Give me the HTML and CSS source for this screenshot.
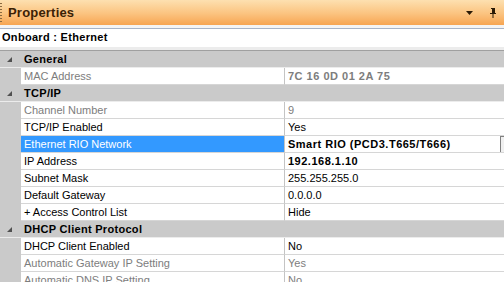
FILE: index.html
```html
<!DOCTYPE html>
<html lang="en">
<head>
  <meta charset="utf-8">
  <title>Properties</title>
  <link rel="stylesheet" href="styles.css">
</head>
<body>
  <div class="panel">
    <!-- Title bar -->
    <div class="title-bar">
      <span class="grip"></span>
      <span class="title">Properties</span>
      <span class="title-tools">
        <svg width="7" height="4" viewBox="0 0 7 4"><path d="M0 0h7L3.5 4z" fill="#2b1a06"/></svg>
        <svg width="8" height="10" viewBox="0 0 8 10"><path d="M2 0h4v1H5v4h2v1H4.5v4h-1V6H1V5h2V1H2z" fill="#2b1a06"/><path d="M5 1h1v4H5z" fill="#2b1a06"/></svg>
      </span>
    </div>

    <div class="object-box">
      <div class="object-name">Onboard : Ethernet</div>
    </div>

    <div class="grid">
      <div class="row category"><span class="gutter"><i class="arrow"></i></span><span class="cat-name">General</span></div>
      <div class="row"><span class="gutter"></span><span class="name dim">MAC Address</span><span class="value dim bold">7C 16 0D 01 2A 75</span></div>

      <div class="row category"><span class="gutter"><i class="arrow"></i></span><span class="cat-name">TCP/IP</span></div>
      <div class="row"><span class="gutter"></span><span class="name dim">Channel Number</span><span class="value dim">9</span></div>
      <div class="row"><span class="gutter"></span><span class="name">TCP/IP Enabled</span><span class="value">Yes</span></div>
      <div class="row selected"><span class="gutter"></span><span class="name">Ethernet RIO Network</span><span class="value bold">Smart RIO (PCD3.T665/T666)<i class="drop"></i></span></div>
      <div class="row"><span class="gutter"></span><span class="name">IP Address</span><span class="value bold">192.168.1.10</span></div>
      <div class="row"><span class="gutter"></span><span class="name">Subnet Mask</span><span class="value">255.255.255.0</span></div>
      <div class="row"><span class="gutter"></span><span class="name">Default Gateway</span><span class="value">0.0.0.0</span></div>
      <div class="row"><span class="gutter"></span><span class="name">+ Access Control List</span><span class="value">Hide</span></div>

      <div class="row category"><span class="gutter"><i class="arrow"></i></span><span class="cat-name">DHCP Client Protocol</span></div>
      <div class="row"><span class="gutter"></span><span class="name">DHCP Client Enabled</span><span class="value">No</span></div>
      <div class="row"><span class="gutter"></span><span class="name dim">Automatic Gateway IP Setting</span><span class="value dim">Yes</span></div>
      <div class="row"><span class="gutter"></span><span class="name dim">Automatic DNS IP Setting</span><span class="value dim">No</span></div>
    </div>
  </div>
</body>
</html>
```

FILE: styles.css
```css
body, html {
  margin: 0;
  height: 100%;
  overflow: hidden;
  background: #ffffff;
  font-family: Tahoma, "Liberation Sans", Arial, sans-serif;
  font-size: 11px;
  color: #000000;
}

.panel {
  display: flex;
  flex-direction: column;
}

/* Title bar */
.title-bar {
  height: 25px;
  display: flex;
  align-items: center;
  background: linear-gradient(#fde0b0, #fbc37f 55%, #f7a552);
  color: #3b2105;
}
.grip {
  width: 2px;
  height: 19px;
  margin-right: 6px;
  background: repeating-linear-gradient(#8a6a40 0 1px, transparent 1px 3px);
}
.title {
  font-size: 13px;
  font-weight: bold;
  letter-spacing: 0.2px;
  flex: 1;
}
.title-tools {
  display: flex;
  align-items: center;
  gap: 16px;
  padding-right: 7px;
}

/* Selected object */
.object-box {
  background: #ececec;
  border-top: 3px solid #f4f4f4;
  padding-bottom: 3px;
  border-bottom: 1px solid #a0a0a0;
}
.object-name {
  height: 18px;
  line-height: 17px;
  padding-left: 2px;
  background: #ffffff;
  border-top: 1px solid #a8b4c8;
  font-weight: bold;
  letter-spacing: 0.3px;
}

/* Property grid */
.row {
  display: grid;
  grid-template-columns: 21px 264px 1fr;
  height: 17px;
  line-height: 16px;
}
.gutter {
  background: #cacaca;
  display: flex;
  align-items: center;
  justify-content: center;
}
.name, .value {
  padding-left: 3px;
  border-bottom: 1px solid #d6d6d6;
  white-space: nowrap;
  overflow: hidden;
}
.name {
  border-right: 1px solid #c4c4c4;
}
.value {
  position: relative;
}
.dim {
  color: #7d7d7d;
}
.bold {
  font-weight: bold;
  letter-spacing: 0.5px;
}

.category {
  background: #cacaca;
  border-bottom: 1px solid #ececec;
  height: 16px;
}
.category .cat-name {
  grid-column: 2 / 4;
  padding-left: 3px;
  font-weight: bold;
  letter-spacing: 0.3px;
}
.arrow {
  width: 0;
  height: 0;
  border-left: 5px solid transparent;
  border-bottom: 5px solid #505050;
  margin-left: -2px;
}

.selected .name {
  background: #3399ff;
  color: #ffffff;
}
.drop {
  position: absolute;
  right: 0;
  top: 0;
  width: 3px;
  height: 15px;
  border: 1px solid #808080;
  border-right: none;
  background: #f0f0f0;
}
```
